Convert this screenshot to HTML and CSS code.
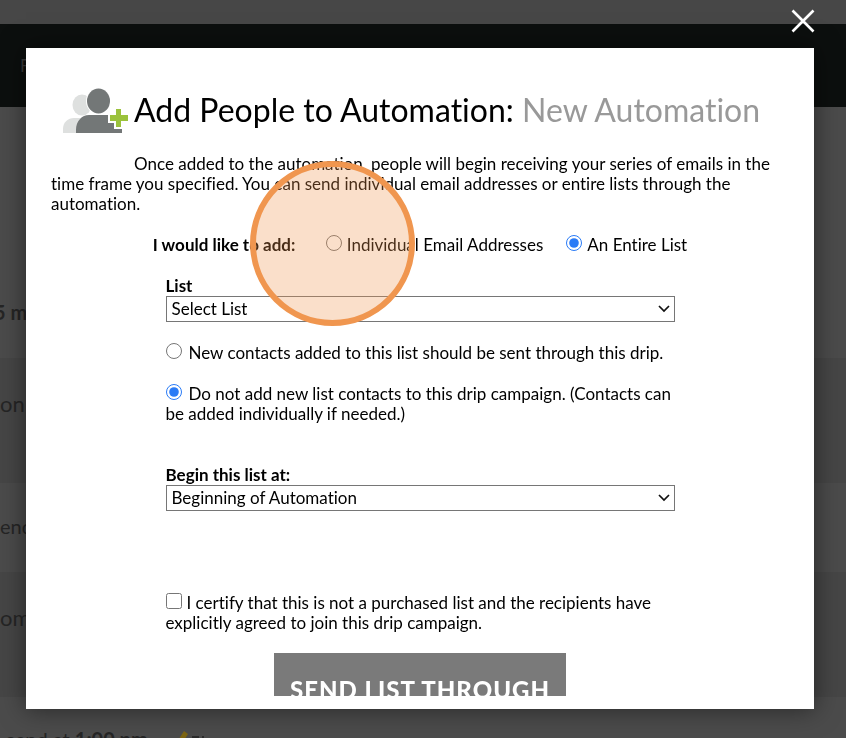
FILE: index.html
```html
<!DOCTYPE html>
<html lang="en">
<head>
<meta charset="utf-8">
<meta name="viewport" content="width=device-width, initial-scale=1">
<title>Add People to Automation</title>
<link rel="stylesheet" href="styles.css">
</head>

<body>

<!-- automation page, dimmed behind the modal -->
<div class="page" aria-hidden="true">
  <div class="topbar"></div>
  <div class="navbar">F</div>
  <div class="step step-first"><b>5 minutes</b></div>
  <div class="step step-title">on</div>
  <div class="step step-send">end</div>
  <div class="step step-title">om</div>
  <div class="step step-last">
    <span>send at <b>1:00 pm</b></span>
    <svg width="40" height="20" viewBox="0 0 40 20"><path d="M3 16l9-14 4 3-9 14z" fill="#7d6512"/><path d="M20 8h7M31 7v12M29 10h7" fill="none" stroke="#2c2c2c" stroke-width="2"/></svg>
  </div>
</div>

<div class="overlay">
  <button class="close" type="button" aria-label="Close">
    <svg width="24" height="24" viewBox="0 0 24 24"><path d="M1.500 1.500l21 21M22.500 1.500l-21 21" stroke="#fff" stroke-width="2.600"/></svg>
  </button>

  <div class="modal" role="dialog" aria-labelledby="modal-title">
    <form class="modal-body">
      <div class="heading">
        <svg class="people" width="66" height="46" viewBox="0 0 66 46">
          <g fill="#dee0df">
            <ellipse cx="19" cy="17" rx="9.500" ry="10.500"/>
            <path d="M0 45v-4c0-7 5-11 11-11h12v15z"/>
          </g>
          <ellipse cx="35.500" cy="13" rx="12.500" ry="13.500" fill="#fff"/>
          <ellipse cx="35.500" cy="13" rx="11.500" ry="12.500" fill="#737777"/>
          <path d="M13 45v-3c0-9 6-15 13-15h19v8h6v6h8v4z" fill="#737777"/>
          <path d="M53 21h5v6h7v6h-7v6h-5v-6h-6v-6h6z" fill="#9bc23c"/>
        </svg>
        <h1 id="modal-title">Add People to Automation: <span>New Automation</span></h1>
      </div>

      <p class="intro">Once added to the automation, people will begin receiving your series of emails in the time frame you specified. You can send individual email addresses or entire lists through the automation.</p>

      <div class="add-type">
        <b>I would like to add:</b>
        <label class="type-individual"><input type="radio" name="type" value="individual"><span class="click-marker"></span>Individual Email Addresses</label>
        <label><input type="radio" name="type" value="list" checked>An Entire List</label>
      </div>

      <div class="fields">
        <label class="field-name" for="list">List</label>
        <div class="select">
          <select id="list"><option>Select List</option></select>
          <svg width="12" height="8" viewBox="0 0 12 8"><path d="M1 1l5 5 5-5" fill="none" stroke="#111" stroke-width="1.700"/></svg>
        </div>

        <label class="option"><input type="radio" name="drip" value="add">New contacts added to this list should be sent through this drip.</label>
        <label class="option"><input type="radio" name="drip" value="skip" checked>Do not add new list contacts to this drip campaign. (Contacts can be added individually if needed.)</label>

        <label class="field-name begin" for="begin">Begin this list at:</label>
        <div class="select">
          <select id="begin"><option>Beginning of Automation</option></select>
          <svg width="12" height="8" viewBox="0 0 12 8"><path d="M1 1l5 5 5-5" fill="none" stroke="#111" stroke-width="1.700"/></svg>
        </div>

        <label class="certify"><input type="checkbox" name="certify">I certify that this is not a purchased list and the recipients have explicitly agreed to join this drip campaign.</label>
      </div>

      <button class="send" type="submit">SEND LIST THROUGH</button>
    </form>
  </div>
</div>

</body>
</html>
```

FILE: styles.css
```css
* {
  box-sizing: border-box;
}

body {
  margin: 0;
  font-family: Lato, "Liberation Sans", sans-serif;
  font-size: 17px;
  line-height: 20px;
  font-variant-ligatures: none;
  color: #000;
}

.page {
  height: 100vh;
  overflow: hidden;
  background: #4b4b4b;
  color: #252525;
}

.topbar {
  height: 24px;
  background: #474747;
}

.navbar {
  height: 83px;
  padding: 32px 20px;
  background: #0c0f0e;
  color: #3a3a3a;
}

.step {
  display: flex;
  align-items: center;
  font-size: 20px;
}

.step-first {
  height: 251px;
  padding-top: 158px;
  text-indent: -6px;
}

.step-title {
  height: 125px;
  padding-bottom: 34px;
  background: #464646;
  font-size: 22px;
}

.step-send {
  height: 89px;
  padding-bottom: 4px;
}

.step-last {
  gap: 24px;
  padding: 32px 6px;
}

/* modal */

.overlay {
  position: fixed;
  top: 0;
  right: 0;
  bottom: 0;
  left: 0;
  display: flex;
  padding: 48px 32px 29px 26px;
}

.close {
  position: absolute;
  top: 9px;
  right: 31px;
  width: 24px;
  height: 24px;
  padding: 0;
  border: 0;
  background: none;
}

.close svg {
  display: block;
}

.modal {
  flex: 1;
  min-width: 0;
  padding: 13px;
  background: #fff;
  box-shadow: 0 0 24px rgba(0, 0, 0, 0.5);
}

.modal-body {
  height: 100%;
  padding: 27px 12px 0;
  overflow: hidden;
}

.heading {
  display: flex;
  gap: 5px;
  padding-left: 12px;
}

.people {
  flex: none;
}

h1 {
  margin: 2px 0 0;
  font-size: 32px;
  font-weight: normal;
  line-height: 40px;
}

h1 span {
  color: #999;
}

.intro {
  margin: 20px 0 0;
  text-indent: 83px;
}

.add-type {
  display: flex;
  justify-content: center;
  gap: 23px;
  margin-top: 21px;
}

.add-type b {
  min-width: 150px;
}

input {
  width: 16px;
  height: 16px;
  margin: 0 5px 0 0;
  accent-color: #2a7bf6;
}

.type-individual {
  position: relative;
}

/* circle centred on the radio button */
.click-marker {
  position: absolute;
  top: -74px;
  left: -76px;
  z-index: 1;
  width: 165px;
  height: 165px;
  border: 6px solid #f0964f;
  border-radius: 50%;
  background: rgba(240, 150, 79, 0.3);
  pointer-events: none;
}

.fields {
  max-width: 509px;
  margin: 21px auto 0;
}

.field-name {
  display: block;
  font-weight: bold;
}

.select {
  display: flex;
  align-items: center;
}

.select select {
  flex: 1;
  height: 26px;
  padding: 0 5px;
  border: 1px solid #767676;
  border-radius: 0;
  background: #fff;
  color: #000;
  font: inherit;
  appearance: none;
}

.select svg {
  margin: 0 5px 0 -17px;
  pointer-events: none;
}

.option {
  display: block;
  margin-top: 21px;
}

.option input {
  margin-right: 7px;
}

.begin {
  margin-top: 41px;
}

.certify {
  display: block;
  margin-top: 82px;
}

.send {
  display: block;
  margin: 20px auto 0;
  padding: 25px 16px;
  border: 0;
  background: #7a7a7a;
  color: #fff;
  font-family: inherit;
  font-size: 24px;
  font-weight: 900;
  line-height: 24px;
  letter-spacing: 1px;
}
```
